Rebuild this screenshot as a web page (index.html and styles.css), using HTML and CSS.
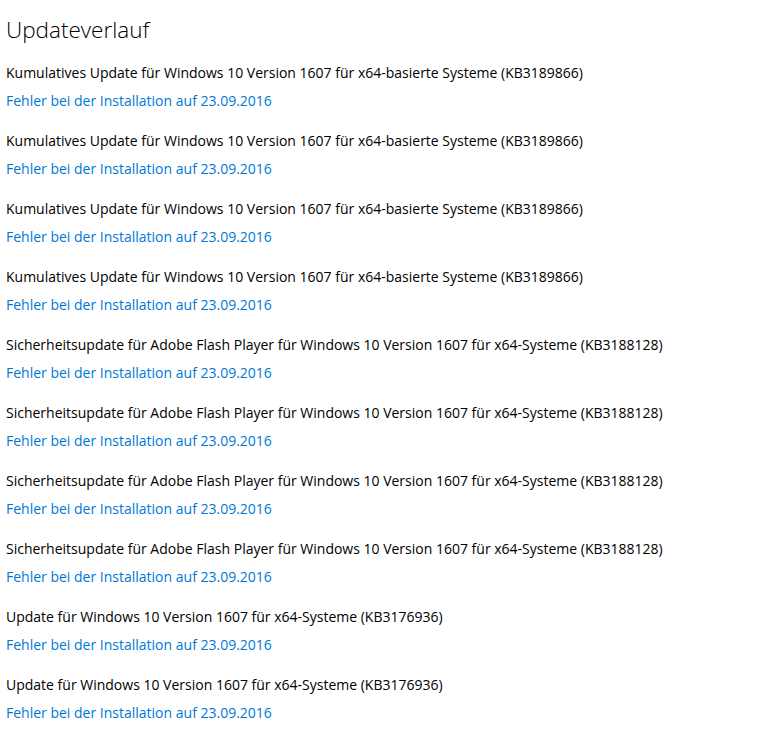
FILE: index.html
```html
<!DOCTYPE html>
<html lang="de">

<head>
     <meta charset="UTF-8" />
     <title>Updateverlauf</title>
     <meta name="viewport" content="width=device-width, initial-scale=1" />
     <link rel="stylesheet" href="styles.css">
</head>

<body>
     <h1>Updateverlauf</h1>

     <ul class="history">
          <li>
               <div class="update-name">Kumulatives Update für Windows 10 Version 1607 für x64-basierte Systeme (KB3189866)</div>
               <a class="status" href="#">Fehler bei der Installation auf 23.09.2016</a>
          </li>
          <li>
               <div class="update-name">Kumulatives Update für Windows 10 Version 1607 für x64-basierte Systeme (KB3189866)</div>
               <a class="status" href="#">Fehler bei der Installation auf 23.09.2016</a>
          </li>
          <li>
               <div class="update-name">Kumulatives Update für Windows 10 Version 1607 für x64-basierte Systeme (KB3189866)</div>
               <a class="status" href="#">Fehler bei der Installation auf 23.09.2016</a>
          </li>
          <li>
               <div class="update-name">Kumulatives Update für Windows 10 Version 1607 für x64-basierte Systeme (KB3189866)</div>
               <a class="status" href="#">Fehler bei der Installation auf 23.09.2016</a>
          </li>
          <li>
               <div class="update-name">Sicherheitsupdate für Adobe Flash Player für Windows 10 Version 1607 für x64-Systeme (KB3188128)</div>
               <a class="status" href="#">Fehler bei der Installation auf 23.09.2016</a>
          </li>
          <li>
               <div class="update-name">Sicherheitsupdate für Adobe Flash Player für Windows 10 Version 1607 für x64-Systeme (KB3188128)</div>
               <a class="status" href="#">Fehler bei der Installation auf 23.09.2016</a>
          </li>
          <li>
               <div class="update-name">Sicherheitsupdate für Adobe Flash Player für Windows 10 Version 1607 für x64-Systeme (KB3188128)</div>
               <a class="status" href="#">Fehler bei der Installation auf 23.09.2016</a>
          </li>
          <li>
               <div class="update-name">Sicherheitsupdate für Adobe Flash Player für Windows 10 Version 1607 für x64-Systeme (KB3188128)</div>
               <a class="status" href="#">Fehler bei der Installation auf 23.09.2016</a>
          </li>
          <li>
               <div class="update-name">Update für Windows 10 Version 1607 für x64-Systeme (KB3176936)</div>
               <a class="status" href="#">Fehler bei der Installation auf 23.09.2016</a>
          </li>
          <li>
               <div class="update-name">Update für Windows 10 Version 1607 für x64-Systeme (KB3176936)</div>
               <a class="status" href="#">Fehler bei der Installation auf 23.09.2016</a>
          </li>
     </ul>
</body>

</html>
```

FILE: styles.css
```css
* {
     box-sizing: border-box;
     margin: 0;
     padding: 0;
}

body {
     font-family: "Open Sans", "Noto Sans", Arial, sans-serif;
     background: #ffffff;
     color: #000000;
     padding: 14px 6px 0 6px;
}

h1 {
     font-size: 22.5px;
     font-weight: 300;
     line-height: 32px;
     margin-bottom: 13px;
}

.history {
     list-style: none;
     display: flex;
     flex-direction: column;
     gap: 12px;
}

.history li {
     display: flex;
     flex-direction: column;
     align-items: flex-start;
}

.update-name {
     font-size: 14px;
     line-height: 28px;
}

.status {
     font-size: 14px;
     line-height: 28px;
     color: #0078d7;
     text-decoration: none;
}
```
